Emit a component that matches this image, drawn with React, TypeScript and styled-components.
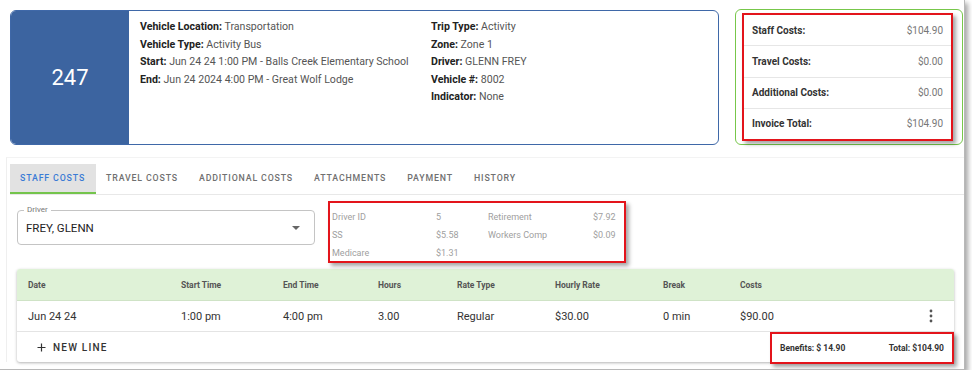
import React from 'react';
import styled, {createGlobalStyle} from 'styled-components';

const GlobalStyle = createGlobalStyle`
    html, body {
        margin: 0;
        padding: 0;
        background: #ffffff;
        font-family: Roboto, "Liberation Sans", Arial, sans-serif;
    }
`;

const Frame = styled.div`
    width: 965px;
    height: 370px;
    background: #fff;
    border-right: 1px solid #b8b8b8;
    border-bottom: 1px solid #b8b8b8;
    box-shadow: 3px 3px 5px rgba(0, 0, 0, 0.35);
    padding: 9px 0 0 10px;
    box-sizing: border-box;
    overflow: hidden;
`;

const TopRow = styled.div`
    display: flex;
    gap: 16px;
    align-items: flex-start;
`;

const TripCard = styled.div`
    width: 709px;
    height: 135px;
    box-sizing: border-box;
    border: 1.5px solid #3f68a8;
    border-radius: 6px;
    overflow: hidden;
    display: flex;
    margin-top: 1px;
`;

const NumberBox = styled.div`
    width: 118px;
    background: #3c64a0;
    color: #fff;
    font-size: 22px;
    display: flex;
    align-items: center;
    justify-content: center;
`;

const InfoArea = styled.div`
    display: grid;
    grid-template-columns: 291px 1fr;
    padding: 7px 0 0 11px;
`;

const InfoColumn = styled.div`
    display: flex;
    flex-direction: column;
`;

const InfoLine = styled.div`
    font-size: 10.6px;
    line-height: 17.6px;
    color: #555;
    white-space: nowrap;
    b {
        color: #222;
        font-weight: 700;
    }
`;

const CostCard = styled.div`
    width: 228px;
    height: 136px;
    box-sizing: border-box;
    border: 1.5px solid #77c74a;
    border-radius: 6px;
    padding: 3px 9px 0 6px;
`;

const RedBox = styled.div`
    border: 2px solid #e3141b;
    box-shadow: 3px 3px 4px rgba(0, 0, 0, 0.35);
    background: #fff;
`;

const CostRow = styled.div<{ last?: boolean }>`
    display: flex;
    justify-content: space-between;
    align-items: center;
    height: 30.25px;
    padding: 0 8px;
    font-size: 10px;
    border-bottom: ${p => p.last ? 'none' : '1px solid #e6e6e6'};
    span:first-child {
        font-weight: 700;
        color: #333;
    }
    span:last-child {
        color: #777;
    }
`;

const Section = styled.div`
    margin: 12px 0 0 -4px;
    border-left: 1px solid #efefef;
    border-top: 1px solid #f3f3f3;
    padding-top: 6px;
`;

const TabBar = styled.div`
    display: flex;
    margin-left: 3px;
    border-bottom: 1px solid #e8e8e8;
`;

const Tab = styled.div<{ active?: boolean }>`
    height: 28px;
    display: flex;
    align-items: center;
    padding: 0 11px 0 10px;
    font-size: 8.8px;
    font-weight: 500;
    letter-spacing: 0.85px;
    color: ${p => p.active ? '#3a7bd5' : '#707070'};
    background: ${p => p.active ? '#e2e2e2' : 'transparent'};
    border-bottom: 2px solid ${p => p.active ? '#74c44c' : 'transparent'};
`;

const Panel = styled.div`
    padding: 6px 0 0 10px;
`;

const DriverRow = styled.div`
    display: flex;
    gap: 13px;
    align-items: flex-start;
`;

const SelectBox = styled.div`
    position: relative;
    margin-top: 9px;
    width: 298px;
    height: 35px;
    box-sizing: border-box;
    border: 1px solid #c4c4c4;
    border-radius: 4px;
    display: flex;
    align-items: center;
    padding: 0 8px;
    font-size: 11.5px;
    color: #222;
`;

const SelectLabel = styled.span`
    position: absolute;
    top: -6px;
    left: 6px;
    padding: 0 3px;
    background: #fff;
    font-size: 8px;
    color: #777;
`;

const Caret = styled.span`
    margin-left: auto;
    margin-right: 6px;
    border-left: 4px solid transparent;
    border-right: 4px solid transparent;
    border-top: 4px solid #666;
`;

const BenefitsBox = styled(RedBox)`
    width: 298px;
    height: 62px;
    box-sizing: border-box;
    display: grid;
    grid-template-columns: 104px 52px 105px 1fr;
    grid-auto-rows: 18px;
    align-items: center;
    padding: 5px 0 0 2px;
    font-size: 9px;
    color: #a0a0a0;
`;

const TableCard = styled.div`
    margin-top: 6px;
    width: 937px;
    border-radius: 3px;
    box-shadow: 0 1px 3px rgba(0, 0, 0, 0.3);
    background: #fff;
`;

const columns = '153px 102px 95px 79px 98px 108px 77px 150px 1fr';

const HeaderRow = styled.div`
    display: grid;
    grid-template-columns: ${columns};
    align-items: center;
    height: 31px;
    padding-left: 11px;
    background: #dff2d7;
    border-bottom: 1px solid #cfe3c6;
    border-radius: 3px 3px 0 0;
    font-size: 8.5px;
    font-weight: 700;
    color: #555;
`;

const DataRow = styled.div`
    display: grid;
    grid-template-columns: ${columns};
    align-items: center;
    height: 30px;
    padding-left: 11px;
    border-bottom: 1px solid #e4e4e4;
    font-size: 11px;
    color: #333;
`;

const MenuCell = styled.div`
    display: flex;
    justify-content: flex-end;
    padding-right: 21px;
`;

const FooterRow = styled.div`
    display: flex;
    align-items: flex-start;
    height: 30px;
`;

const NewLine = styled.div`
    display: flex;
    align-items: center;
    gap: 7px;
    height: 30px;
    padding-left: 20px;
    font-size: 10px;
    font-weight: 500;
    letter-spacing: 1.2px;
    color: #333;
`;

const TotalsBox = styled(RedBox)`
    margin-left: auto;
    width: 184px;
    height: 32px;
    box-sizing: border-box;
    display: flex;
    justify-content: space-between;
    align-items: center;
    padding: 0 8px;
    font-size: 8.5px;
    font-weight: 700;
    color: #333;
    position: relative;
    z-index: 1;
`;

const MoreIcon = () => (
    <svg width="4" height="14" viewBox="0 0 4 14">
        <circle cx="2" cy="2" r="1.4" fill="#555"/>
        <circle cx="2" cy="7" r="1.4" fill="#555"/>
        <circle cx="2" cy="12" r="1.4" fill="#555"/>
    </svg>
);

const PlusIcon = () => (
    <svg width="9" height="9" viewBox="0 0 9 9">
        <path d="M4.5 0.5v8M0.5 4.5h8" stroke="#333" strokeWidth="1.2"/>
    </svg>
);

const tabs = ['STAFF COSTS', 'TRAVEL COSTS', 'ADDITIONAL COSTS', 'ATTACHMENTS', 'PAYMENT', 'HISTORY'];

const costs = [
    ['Staff Costs:', '$104.90'],
    ['Travel Costs:', '$0.00'],
    ['Additional Costs:', '$0.00'],
    ['Invoice Total:', '$104.90'],
];

const heads = ['Date', 'Start Time', 'End Time', 'Hours', 'Rate Type', 'Hourly Rate', 'Break', 'Costs'];
const row = ['Jun 24 24', '1:00 pm', '4:00 pm', '3.00', 'Regular', '$30.00', '0 min', '$90.00'];

export default function App() {
    return (
        <Frame>
            <GlobalStyle/>
            <TopRow>
                <TripCard>
                    <NumberBox>247</NumberBox>
                    <InfoArea>
                        <InfoColumn>
                            <InfoLine><b>Vehicle Location:</b> Transportation</InfoLine>
                            <InfoLine><b>Vehicle Type:</b> Activity Bus</InfoLine>
                            <InfoLine><b>Start:</b> Jun 24 24 1:00 PM - Balls Creek Elementary School</InfoLine>
                            <InfoLine><b>End:</b> Jun 24 2024 4:00 PM - Great Wolf Lodge</InfoLine>
                        </InfoColumn>
                        <InfoColumn>
                            <InfoLine><b>Trip Type:</b> Activity</InfoLine>
                            <InfoLine><b>Zone:</b> Zone 1</InfoLine>
                            <InfoLine><b>Driver:</b> GLENN FREY</InfoLine>
                            <InfoLine><b>Vehicle #:</b> 8002</InfoLine>
                            <InfoLine><b>Indicator:</b> None</InfoLine>
                        </InfoColumn>
                    </InfoArea>
                </TripCard>
                <CostCard>
                    <RedBox>
                        {costs.map(([label, value], i) => (
                            <CostRow key={label} last={i === costs.length - 1}>
                                <span>{label}</span>
                                <span>{value}</span>
                            </CostRow>
                        ))}
                    </RedBox>
                </CostCard>
            </TopRow>

            <Section>
                <TabBar>
                    {tabs.map((t, i) => <Tab key={t} active={i === 0}>{t}</Tab>)}
                </TabBar>
                <Panel>
                    <DriverRow>
                        <SelectBox>
                            <SelectLabel>Driver</SelectLabel>
                            FREY, GLENN
                            <Caret/>
                        </SelectBox>
                        <BenefitsBox>
                            <span>Driver ID</span><span>5</span><span>Retirement</span><span>$7.92</span>
                            <span>SS</span><span>$5.58</span><span>Workers Comp</span><span>$0.09</span>
                            <span>Medicare</span><span>$1.31</span>
                        </BenefitsBox>
                    </DriverRow>
                    <TableCard>
                        <HeaderRow>
                            {heads.map(h => <span key={h}>{h}</span>)}
                        </HeaderRow>
                        <DataRow>
                            {row.map((c, i) => <span key={i}>{c}</span>)}
                            <MenuCell><MoreIcon/></MenuCell>
                        </DataRow>
                        <FooterRow>
                            <NewLine><PlusIcon/>NEW LINE</NewLine>
                            <TotalsBox>
                                <span>Benefits: $ 14.90</span>
                                <span>Total: $104.90</span>
                            </TotalsBox>
                        </FooterRow>
                    </TableCard>
                </Panel>
            </Section>
        </Frame>
    );
}
